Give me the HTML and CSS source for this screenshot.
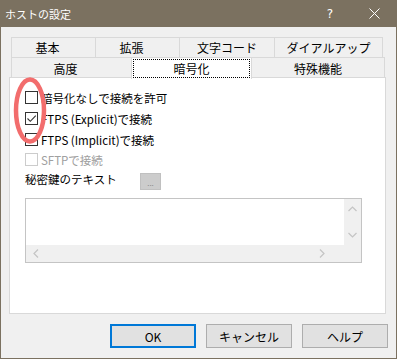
FILE: index.html
```html
<!DOCTYPE html>
<html lang="ja">
<head>
  <meta charset="UTF-8">
  <title>ホストの設定</title>
  <link rel="stylesheet" href="styles.css">
</head>
<body>
  <div class="window">
    <div class="titlebar">
      <span class="title">ホストの設定</span>
      <span class="help-btn">?</span>
      <span class="close-btn">
        <svg width="11" height="11" viewBox="0 0 11 11"><path d="M0.5 0.5 L10.5 10.5 M10.5 0.5 L0.5 10.5" stroke="#fff" stroke-width="1"/></svg>
      </span>
    </div>

    <div class="content">
      <!-- タブ（2段） -->
      <div class="tabs">
        <div class="tab-row back">
          <div class="tab lean">基本</div>
          <div class="tab lean">拡張</div>
          <div class="tab">文字コード</div>
          <div class="tab">ダイアルアップ</div>
        </div>
        <div class="tab-row front">
          <div class="tab lean">高度</div>
          <div class="tab selected"><span class="focus">暗号化</span></div>
          <div class="tab">特殊機能</div>
        </div>
      </div>

      <div class="panel">
        <label class="check-row">
          <span class="box"></span>暗号化なしで接続を許可
        </label>
        <label class="check-row">
          <span class="box">
            <svg width="11" height="11" viewBox="0 0 11 11"><path d="M1.5 5.5 L4.3 8.3 L9.8 2.6" fill="none" stroke="#333" stroke-width="1.1"/></svg>
          </span>FTPS (Explicit)で接続
        </label>
        <label class="check-row">
          <span class="box"></span>FTPS (Implicit)で接続
        </label>
        <label class="check-row disabled short">
          <span class="box"></span>SFTPで接続
        </label>
        <div class="key-row">
          <span class="key-label">秘密鍵のテキスト</span>
          <span class="dots-btn">...</span>
        </div>

        <div class="textbox">
          <div class="text-area"></div>
          <div class="vscroll">
            <svg width="9" height="6" viewBox="0 0 9 6"><path d="M0.5 5 L4.5 1 L8.5 5" fill="none" stroke="#c4c4c4" stroke-width="1.2"/></svg>
            <svg width="9" height="6" viewBox="0 0 9 6"><path d="M0.5 1 L4.5 5 L8.5 1" fill="none" stroke="#c4c4c4" stroke-width="1.2"/></svg>
          </div>
          <div class="hscroll">
            <svg width="6" height="9" viewBox="0 0 6 9"><path d="M5 0.5 L1 4.5 L5 8.5" fill="none" stroke="#c4c4c4" stroke-width="1.2"/></svg>
            <svg width="6" height="9" viewBox="0 0 6 9"><path d="M1 0.5 L5 4.5 L1 8.5" fill="none" stroke="#c4c4c4" stroke-width="1.2"/></svg>
          </div>
          <div class="corner"></div>
        </div>
      </div>

      <div class="buttons">
        <div class="btn default">OK</div>
        <div class="btn">キャンセル</div>
        <div class="btn">ヘルプ</div>
      </div>

      <!-- 赤い丸の注釈 -->
      <svg class="mark" width="36" height="70" viewBox="0 0 36 70">
        <ellipse cx="18" cy="34.5" rx="14" ry="31" fill="none" stroke="#f26d6d" stroke-width="4.5"/>
      </svg>
    </div>
  </div>
</body>
</html>
```

FILE: styles.css
```css
body {
  margin: 0;
  font-family: "Noto Sans CJK JP", "Noto Sans", sans-serif;
  font-size: 11.5px;
  color: #000;
}
.window {
  width: 397px;
  height: 359px;
  box-sizing: border-box;
  border: 1px solid #7b7160;
  border-top: 0;
  background-color: #f0f0f0;
}
.titlebar {
  height: 27px;
  margin: 0 -1px;
  background-color: #7b7160;
  color: #fff;
  display: flex;
  align-items: center;
  font-size: 11px;
}
.title {
  padding-left: 5px;
  flex: 1;
}
.help-btn {
  width: 46px;
  text-align: center;
  font-family: "DejaVu Sans", sans-serif;
  font-size: 12px;
  margin-right: -2px;
}
.close-btn {
  width: 46px;
  display: flex;
  justify-content: center;
}
.content {
  position: relative;
  padding: 10px 8px 10px 8px;
}
.tabs {
  margin-left: 2px;
}
.tab-row {
  display: grid;
  height: 20px;
}
.tab-row.back {
  grid-template-columns: 84px 84px 95px 109px;
}
.tab-row.front {
  grid-template-columns: 120px 121px 133px;
}
.tab {
  border: 1px solid #d9d9d9;
  border-right: 0;
  border-bottom: 0;
  display: flex;
  align-items: center;
  justify-content: center;
  font-size: 12px;
}
.tab.lean {
  padding-right: 12px;
}
.tab:last-child {
  border-right: 1px solid #d9d9d9;
}
.tab.selected {
  background-color: #fff;
  border-right: 1px solid #d9d9d9;
  margin-bottom: -1px;
  position: relative;
  padding: 1px;
}
.tab.selected + .tab {
  border-left: 0;
}
.focus {
  flex: 1;
  align-self: stretch;
  display: flex;
  align-items: center;
  justify-content: center;
  border: 1px dotted #000;
}
.panel {
  width: 377px;
  height: 237px;
  box-sizing: border-box;
  background-color: #fff;
  border: 1px solid #d9d9d9;
  padding: 9px 0 0 15px;
}
.check-row {
  display: flex;
  align-items: center;
  height: 21px;
}
.check-row.short {
  height: 19px;
}
.box {
  width: 11px;
  height: 11px;
  border: 1px solid #333;
  background-color: #fff;
  margin-right: 3px;
  display: flex;
}
.disabled {
  color: #a0a0a0;
}
.disabled .box {
  border-color: #cccccc;
}
.key-row {
  display: flex;
  align-items: center;
  height: 19px;
}
.key-label {
  width: 115px;
}
.dots-btn {
  width: 19px;
  height: 15px;
  background-color: #cccccc;
  border: 1px solid #c0c0c0;
  color: #8a8a8a;
  font-size: 8px;
  text-align: center;
  line-height: 17px;
  margin-top: 6px;
}
.textbox {
  margin-top: 10px;
  width: 337px;
  height: 65px;
  box-sizing: border-box;
  border: 1px solid #c4c4c4;
  display: grid;
  grid-template-columns: 1fr 17px;
  grid-template-rows: 1fr 17px;
}
.vscroll {
  background-color: #f0f0f0;
  display: flex;
  flex-direction: column;
  align-items: center;
  justify-content: space-between;
  padding: 7px 0 7px;
}
.hscroll {
  background-color: #f0f0f0;
  display: flex;
  align-items: center;
  justify-content: space-between;
  padding: 0 19px 0 7px;
}
.corner {
  background-color: #f0f0f0;
}
.buttons {
  display: flex;
  justify-content: flex-end;
  gap: 10px;
  margin-top: 10px;
}
.btn {
  width: 86px;
  height: 24px;
  box-sizing: border-box;
  background-color: #e1e1e1;
  border: 1px solid #adadad;
  display: flex;
  align-items: center;
  justify-content: center;
  font-size: 12px;
}
.btn.default {
  border: 2px solid #0078d7;
}
.mark {
  position: absolute;
  left: 11px;
  top: 49px;
}
```
